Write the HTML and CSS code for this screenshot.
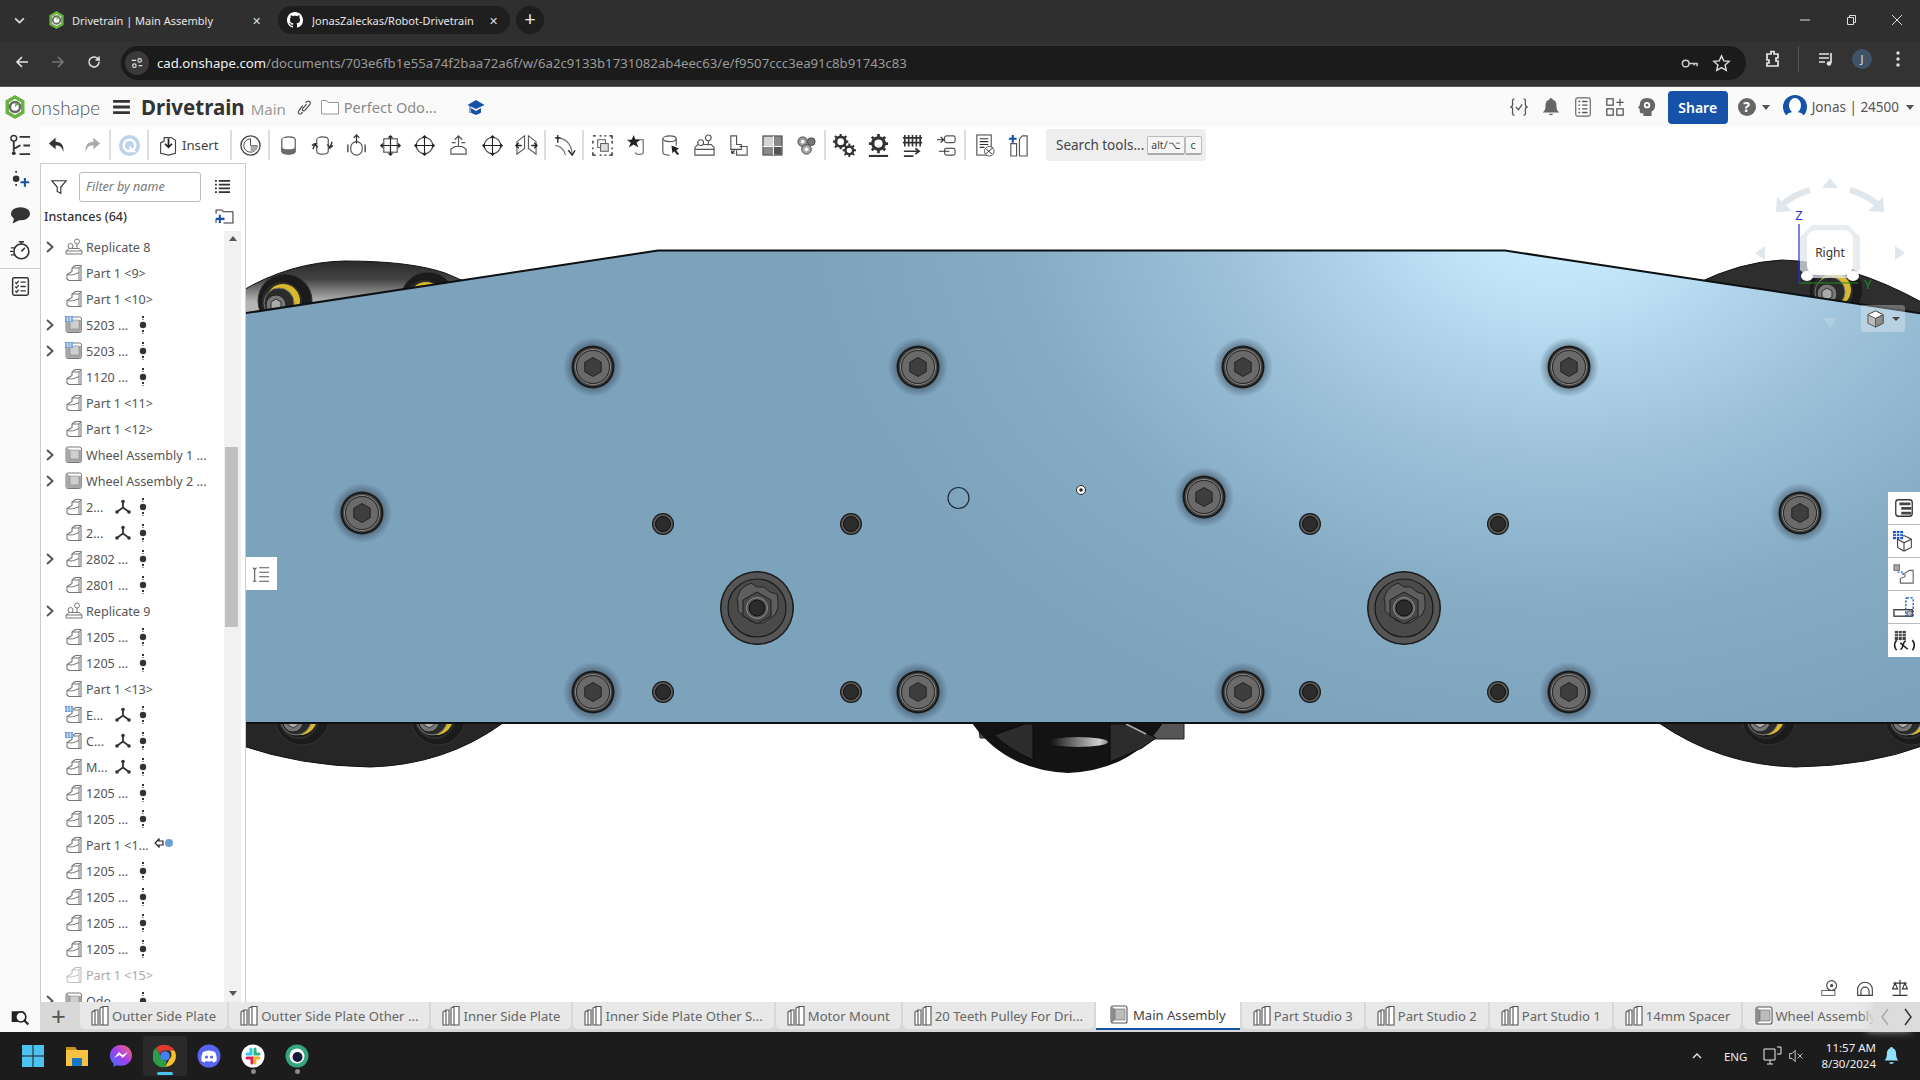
FILE: index.html
```html
<!DOCTYPE html>
<html lang="en">
<head>
  <meta charset="UTF-8">
  <title>Drivetrain | Main Assembly</title>
  <link rel="stylesheet" href="styles.css">
</head>
<body>
  <!-- shared icons -->
  <svg class="defs" aria-hidden="true">
    <defs>
      <symbol id="i-logo" viewBox="0 0 20 24"><path d="M10 0l9.500 5.500v13L10 24 .5 18.500v-13z" fill="#69b342"/><path d="M10 4l6 3.500v9L10 20l-6-3.500v-9z" fill="#fff"/><circle cx="10" cy="12" r="5" fill="none" stroke="#666" stroke-width="2.400"/><path d="M10 7l4 2-4 3z" fill="#69b342"/></symbol>
      <symbol id="i-github" viewBox="0 0 16 16"><path fill="#fff" d="M8 0C3.580 0 0 3.580 0 8c0 3.540 2.290 6.530 5.470 7.590.4.070.55-.17.55-.38 0-.19-.01-.82-.01-1.490-2.010.37-2.530-.49-2.690-.94-.09-.23-.48-.94-.82-1.130-.28-.15-.68-.52-.01-.53.63-.01 1.080.58 1.230.82.72 1.210 1.870.87 2.330.66.070-.52.28-.87.51-1.070-1.780-.2-3.640-.89-3.640-3.950 0-.87.31-1.590.82-2.150-.08-.2-.36-1.020.08-2.120 0 0 .67-.21 2.200.82.64-.18 1.320-.27 2-.27s1.360.09 2 .27c1.530-1.040 2.200-.82 2.200-.82.44 1.100.16 1.920.08 2.120.51.56.82 1.270.82 2.150 0 3.070-1.870 3.750-3.650 3.950.29.25.54.73.54 1.480 0 1.070-.01 1.930-.01 2.200 0 .21.15.46.55.38A8.013 8.013 0 0 0 16 8c0-4.420-3.580-8-8-8z"/></symbol>
      <symbol id="i-part" viewBox="0 0 18 18"><path d="M2 10.500l5-3V4l3.500-2.500H16V16.500H4L2 15z" fill="#fff" stroke="#777" stroke-width="1.100" stroke-linejoin="round"/><path d="M7 4h7l2-2.500M14 4v12.500M2 10.500c3 .6 5 .6 7 0l5-2" fill="none" stroke="#777" stroke-width="1"/></symbol>
      <symbol id="i-partgrid" viewBox="0 0 18 18"><use href="#i-part"/><rect x="0" y="0" width="8" height="6" fill="#5b8fd6"/><path d="M0 2h8M0 4h8M2.700 0v6M5.400 0v6" stroke="#fff" stroke-width=".6"/></symbol>
      <symbol id="i-asm" viewBox="0 0 18 18"><rect x="1" y="1" width="15.500" height="15.500" rx="2" fill="#fff" stroke="#777"/><path d="M1 1l4 3h11.500v12H5L1 16.500z" fill="#a8a8a8"/><rect x="5" y="4" width="9" height="9" fill="#cfcfcf" stroke="#888" stroke-width=".6"/></symbol>
      <symbol id="i-asmgrid" viewBox="0 0 18 18"><use href="#i-asm"/><rect x="0" y="0" width="8" height="6" fill="#5b8fd6"/><path d="M0 2h8M0 4h8M2.700 0v6M5.400 0v6" stroke="#fff" stroke-width=".6"/></symbol>
      <symbol id="i-repl" viewBox="0 0 18 18"><path d="M1 16v-3l3-2.500h10l3 2.500v3zM1 13h16" fill="#fff" stroke="#777"/><circle cx="5.500" cy="8" r="2.500" fill="#fff" stroke="#777"/><circle cx="12" cy="3.500" r="2.500" fill="#fff" stroke="#777"/><path d="M12 6v5" stroke="#777"/></symbol>
      <symbol id="i-dots" viewBox="0 0 10 18"><path d="M5 0v4M5 14v4" stroke="#333" stroke-width="2" stroke-dasharray="2 1.500"/><circle cx="5" cy="9" r="3.200" fill="#333"/></symbol>
      <symbol id="i-triad" viewBox="0 0 16 16"><path d="M8 8.500V3M8 8.500l-5.500 4M8 8.500l5.500 4" stroke="#333" stroke-width="1.800" fill="none"/><circle cx="8" cy="2.500" r="1.800" fill="#333"/><circle cx="2" cy="13" r="1.800" fill="#333"/><circle cx="14" cy="13" r="1.800" fill="#333"/></symbol>
      <symbol id="i-studio" viewBox="0 0 20 20"><path d="M1 6l3-2h3v15H1zM4 4v15M9 19V2l3-1.500h5V19zM12 .5V19" fill="#fff" stroke="#555" stroke-width="1.100"/></symbol>
      <symbol id="i-tabasm" viewBox="0 0 20 20"><rect x="2" y="1" width="16" height="17" rx="2" fill="#fff" stroke="#555" stroke-width="1.100"/><path d="M2 1l4 3h10v11H6l-4 3z" fill="#8d8d8d"/><rect x="6" y="4" width="10" height="11" fill="#bcbcbc" stroke="#666" stroke-width=".6"/></symbol>
      <symbol id="i-cyl" viewBox="0 0 24 24"><ellipse cx="12" cy="6" rx="7" ry="3" fill="#fff" stroke="#555" stroke-width="1.200"/><path d="M5 6v12c0 2 3 3 7 3s7-1 7-3V6" fill="#fff" stroke="#555" stroke-width="1.200"/><path d="M5 13c0 2 3 3 7 3s7-1 7-3v5c0 2-3 3-7 3s-7-1-7-3z" fill="#6a6a6a"/></symbol>
      <symbol id="i-rev" viewBox="0 0 24 24"><ellipse cx="12" cy="6" rx="6" ry="3" fill="#fff" stroke="#555" stroke-width="1.200"/><path d="M6 6v12c0 2 3 3 6 3s6-1 6-3V6" fill="#fff" stroke="#555" stroke-width="1.200"/><path d="M1 12c2-2 3-2 5-2M23 12c-2 2-3 3-5 3M2 16l2-5 3 3M22 8l-2 6-3-3" fill="none" stroke="#333" stroke-width="1.500"/></symbol>
      <symbol id="i-sweep" viewBox="0 0 24 24"><rect x="6" y="8" width="12" height="14" rx="6" fill="#fff" stroke="#555" stroke-width="1.200"/><path d="M12 1v9M9 4l3-3 3 3M3 11v8M21 11v8" fill="none" stroke="#333" stroke-width="1.300"/></symbol>
      <symbol id="i-cross" viewBox="0 0 24 24"><rect x="5" y="5" width="14" height="14" fill="#fff" stroke="#555" stroke-width="1.200"/><path d="M12 2v20M2 12h20" stroke="#222" stroke-width="1.200"/><path d="M12 1l-3 3h6zM12 23l-3-3h6zM1 12l3-3v6zM23 12l-3-3v6z" fill="#222"/></symbol>
      <symbol id="i-crosscirc" viewBox="0 0 24 24"><circle cx="12" cy="12" r="8.500" fill="#fff" stroke="#555" stroke-width="1.200"/><path d="M12 2v20M2 12h20" stroke="#222" stroke-width="1.100"/><path d="M12 1l-3 3h6zM12 23l-3-3h6zM1 12l3-3v6zM23 12l-3-3v6z" fill="#222"/></symbol>
      <symbol id="i-wrap" viewBox="0 0 24 24"><path d="M4 21h16v-5l-4-3H8l-4 3zM12 13V2M8 6l4-4 4 4M5 9h4M15 9h4" fill="#fff" stroke="#555" stroke-width="1.200"/></symbol>
      <symbol id="i-split" viewBox="0 0 24 24"><path d="M2 21V8l8-6v13zM22 21V8l-8-6v13z" fill="#fff" stroke="#555" stroke-width="1.100"/><path d="M1 12h6M23 12h-6M4 9l-3 3 3 3M20 9l3 3-3 3" fill="none" stroke="#222" stroke-width="1.400"/></symbol>
      <symbol id="i-curve" viewBox="0 0 24 24"><path d="M3 4c10 0 16 6 17 17M2 12c6 0 10 5 11 10" fill="none" stroke="#777" stroke-width="1.300"/><path d="M5 1v8M2 4h6M16 17l4 5 3-5" fill="none" stroke="#222" stroke-width="1.400"/></symbol>
      <symbol id="i-select" viewBox="0 0 24 24"><path d="M2 2h3M19 2h3v3M2 19v3h3M22 19v3h-3M2 7v3M22 7v3M2 14v2M22 14v2M9 2h2M14 2h2M9 22h2M14 22h2" stroke="#222" stroke-width="1.400" fill="none"/><rect x="7" y="6" width="8" height="8" fill="#fff" stroke="#555"/><rect x="10" y="10" width="8" height="8" fill="#ddd" stroke="#555"/></symbol>
      <symbol id="i-star" viewBox="0 0 24 24"><path d="M7 6h12v13c0 3-8 3-8 0" fill="#fff" stroke="#666" stroke-width="1.200"/><path d="M9 1l2 5h5l-4 3 2 5-5-3-5 3 2-5-4-3h5z" fill="#222"/></symbol>
      <symbol id="i-cursor" viewBox="0 0 24 24"><ellipse cx="11" cy="5" rx="7" ry="3" fill="#fff" stroke="#555" stroke-width="1.200"/><path d="M4 5v14c0 2 3 3 7 3M18 5v7" fill="#fff" stroke="#555" stroke-width="1.200"/><path d="M13 12l8 3-3 2 3 4-2 1-3-4-2 2z" fill="#222"/></symbol>
      <symbol id="i-kit" viewBox="0 0 24 24"><path d="M2 22v-8l3-3h14l3 3v8zM2 16h20" fill="#fff" stroke="#555" stroke-width="1.200"/><circle cx="8" cy="9" r="3" fill="#fff" stroke="#555" stroke-width="1.200"/><circle cx="16" cy="4" r="3" fill="#fff" stroke="#555" stroke-width="1.200"/><path d="M16 7v5" stroke="#555" stroke-width="1.200"/></symbol>
      <symbol id="i-parts" viewBox="0 0 24 24"><path d="M4 2h6v9h5v5H4zM13 13h8v9H10v-5" fill="#fff" stroke="#555" stroke-width="1.200"/><path d="M5 20l3-3M5 17v3h3" fill="none" stroke="#222" stroke-width="1.100"/></symbol>
      <symbol id="i-quad" viewBox="0 0 24 24"><rect x="2" y="2" width="20" height="20" fill="#888" stroke="#444"/><rect x="3" y="3" width="10" height="10" fill="#d5d5d5"/><rect x="13" y="13" width="8" height="8" fill="#555"/><path d="M13 2v20M2 13h20" stroke="#fff"/></symbol>
      <symbol id="i-blob" viewBox="0 0 24 24"><circle cx="8" cy="8" r="5" fill="#999" stroke="#444"/><circle cx="17" cy="8" r="4" fill="#777" stroke="#444"/><circle cx="12" cy="16" r="5" fill="#aaa" stroke="#444"/><circle cx="8" cy="8" r="2" fill="#fff"/><circle cx="12" cy="16" r="2" fill="#fff"/></symbol>
      <symbol id="i-gears" viewBox="0 0 24 24"><circle cx="8" cy="8" r="5" fill="none" stroke="#333" stroke-width="3"/><path d="M8 0v3M8 13v3M0 8h3M13 8h3M2 2l2 2M12 12l2 2M14 2l-2 2M2 14l2-2" stroke="#333" stroke-width="2.200"/><circle cx="17" cy="17" r="4" fill="none" stroke="#333" stroke-width="2.600"/><path d="M17 10v3M17 21v3M10 17h3M21 17h3M12 12l2 2M20 20l2 2M22 12l-2 2M12 22l2-2" stroke="#333" stroke-width="2"/></symbol>
      <symbol id="i-gear" viewBox="0 0 24 24"><circle cx="12" cy="10" r="6" fill="none" stroke="#333" stroke-width="3.400"/><path d="M12 0v4M12 16v4M2 10h4M18 10h4M5 3l3 3M16 14l3 3M19 3l-3 3M5 17l3-3" stroke="#333" stroke-width="2.800"/><path d="M2 23h20" stroke="#333" stroke-width="2.400"/></symbol>
      <symbol id="i-rack" viewBox="0 0 24 24"><path d="M4 1v12M8 1v12M12 1v12M16 1v12M20 1v12M2 4h20M2 9h20" stroke="#333" stroke-width="1.700" fill="none"/><path d="M3 18h16M15 15l4 3-4 3M3 23h10" stroke="#333" stroke-width="1.800" fill="none"/></symbol>
      <symbol id="i-link2" viewBox="0 0 24 24"><rect x="10" y="2" width="11" height="7" rx="2" fill="#fff" stroke="#555" stroke-width="1.200"/><rect x="10" y="15" width="11" height="7" rx="2" fill="#fff" stroke="#555" stroke-width="1.200"/><path d="M2 6h7M6 3l3 3-3 3M15 18H4" stroke="#333" stroke-width="1.300" fill="none"/></symbol>
      <symbol id="i-bom" viewBox="0 0 24 24"><rect x="4" y="1" width="15" height="21" fill="#fff" stroke="#555" stroke-width="1.200"/><path d="M7 5h9M7 8h9M7 11h9M7 14h5" stroke="#333" stroke-width="1.200"/><circle cx="17" cy="18" r="5" fill="#fff" stroke="#555"/><path d="M13 21l8-7M14 16l6 5" stroke="#333"/></symbol>
      <symbol id="i-addcol" viewBox="0 0 24 24"><path d="M4 10h6v13H4zM13 5l3-3h5v21h-8z" fill="#fff" stroke="#555" stroke-width="1.200"/><path d="M6 1v8M2 5h8" stroke="#1552a8" stroke-width="2.200"/></symbol>
      <symbol id="i-side1" viewBox="0 0 24 24"><rect x="3" y="3" width="18" height="18" rx="3" fill="#fff" stroke="#333" stroke-width="1.400"/><path d="M7 6h12v3H7zM9 11h11v3H9zM9 16h11v3H9z" fill="#444"/></symbol>
      <symbol id="i-side2" viewBox="0 0 24 24"><path d="M5 10v9l7 4 8-4V10l-8-4z" fill="#fff" stroke="#444" stroke-width="1.200"/><path d="M5 10l7 4 8-4M12 14v9" stroke="#444" fill="none" stroke-width="1.200"/><rect x="0" y="1" width="11" height="9" fill="#1552c8"/><path d="M0 4h11M0 7h11M3.700 1v9M7.400 1v9" stroke="#fff"/></symbol>
      <symbol id="i-side3" viewBox="0 0 24 24"><rect x="1" y="2" width="6" height="6" fill="#aaa" stroke="#666"/><path d="M5 10h6v4" stroke="#1552c8" stroke-dasharray="2 1.500" fill="none" stroke-width="1.400"/><path d="M8 22v-5l5-2v-4l5-3h4v14H10z" fill="#fff" stroke="#666" stroke-width="1.200"/></symbol>
      <symbol id="i-side4" viewBox="0 0 24 24"><rect x="1" y="15" width="20" height="7" fill="#fff" stroke="#222" stroke-width="1.300"/><rect x="14" y="2" width="8" height="20" rx="1" fill="none" stroke="#1552c8" stroke-dasharray="2.500 1.500" stroke-width="1.400"/><circle cx="18" cy="19" r="3" fill="#bbb" stroke="#555"/></symbol>
      <symbol id="i-side5" viewBox="0 0 24 24"><rect x="2" y="1" width="12" height="10" fill="#444"/><path d="M2 4h12M2 7h12M6 1v10M10 1v10" stroke="#fff" stroke-width=".8"/><path d="M4 11c-3 3-3 8 0 11M21 11c3 3 3 8 0 11M8 21c4 0 2-9 6-9M8 14l8 7" fill="none" stroke="#222" stroke-width="1.800"/></symbol>
      <symbol id="i-chev" viewBox="0 0 8 12"><path d="M1 1l5.500 5L1 11" fill="none" stroke="#555" stroke-width="1.900"/></symbol>
    </defs>
  </svg>

  <!-- browser -->
  <div class="tabstrip">
    <svg class="tab-list" viewBox="0 0 10 10"><path d="M1 3l4 4 4-4" fill="none" stroke="#ddd" stroke-width="1.500"/></svg>
    <div class="btab">
      <svg class="fav"><use href="#i-logo"/></svg>
      <span class="btab-title">Drivetrain | Main Assembly</span>
      <span class="btab-x">✕</span>
    </div>
    <div class="btab btab-dark">
      <svg class="fav"><use href="#i-github"/></svg>
      <span class="btab-title">JonasZaleckas/Robot-Drivetrain</span>
      <span class="btab-x">✕</span>
    </div>
    <div class="btab-new">+</div>
    <div class="win-ctrl">
      <svg viewBox="0 0 12 12"><path d="M1 6h10" stroke="#ddd"/></svg>
      <svg viewBox="0 0 12 12"><path d="M2.500 3.500h6v7h-6zM4.500 3.500V1.500h6v7h-2" fill="none" stroke="#ddd"/></svg>
      <svg viewBox="0 0 12 12"><path d="M1 1l10 10M11 1L1 11" stroke="#ddd"/></svg>
    </div>
  </div>
  <div class="urlbar">
    <svg class="nav-ic" viewBox="0 0 16 16"><path d="M14 8H3M8 3L3 8l5 5" fill="none" stroke="#e3e3e3" stroke-width="1.600"/></svg>
    <svg class="nav-ic" viewBox="0 0 16 16"><path d="M2 8h11M8 3l5 5-5 5" fill="none" stroke="#777" stroke-width="1.600"/></svg>
    <svg class="nav-ic" viewBox="0 0 16 16"><path d="M13 8a5 5 0 1 1-1.500-3.600L13 6V2.500M13 6H9.500" fill="none" stroke="#e3e3e3" stroke-width="1.500"/></svg>
    <div class="omnibox">
      <span class="site-info"><svg viewBox="0 0 16 16"><path d="M2 5h5M10 11h4" stroke="#e3e3e3" stroke-width="1.300"/><circle cx="11" cy="5" r="2" fill="none" stroke="#e3e3e3" stroke-width="1.300"/><circle cx="5" cy="11" r="2" fill="none" stroke="#e3e3e3" stroke-width="1.300"/></svg></span>
      <span class="url"><b>cad.onshape.com</b>/documents/703e6fb1e55a74f2baa72a6f/w/6a2c9133b1731082ab4eec63/e/f9507ccc3ea91c8b91743c83</span>
      <svg class="omni-ic" viewBox="0 0 20 20"><circle cx="6" cy="10" r="3.500" fill="none" stroke="#ccc" stroke-width="1.600"/><path d="M9.500 10H18v3M15 10v2" fill="none" stroke="#ccc" stroke-width="1.600"/></svg>
      <svg class="omni-ic" viewBox="0 0 20 20"><path d="M10 2l2.400 5.200 5.600.6-4.200 3.800 1.200 5.600L10 14.400 5 17.200l1.200-5.600L2 7.800l5.600-.6z" fill="none" stroke="#ddd" stroke-width="1.500"/></svg>
    </div>
    <svg class="ext-ic" viewBox="0 0 20 20"><path d="M4 5h4V2.500h3V5h4v4h-2v3h2v5H4v-3h2v-3H4z" fill="none" stroke="#e8e8e8" stroke-width="1.700"/></svg>
    <span class="url-div"></span>
    <svg class="ext-ic media" viewBox="0 0 20 20"><path d="M3 5h10M3 9h10M3 13h6" stroke="#e3e3e3" stroke-width="1.700"/><path d="M15 4v10" stroke="#e3e3e3" stroke-width="1.700"/><circle cx="13" cy="14.500" r="2.300" fill="#e3e3e3"/></svg>
    <span class="avatar">J</span>
    <svg class="ext-ic kebab" viewBox="0 0 4 20"><circle cx="2" cy="4" r="1.700" fill="#e3e3e3"/><circle cx="2" cy="10" r="1.700" fill="#e3e3e3"/><circle cx="2" cy="16" r="1.700" fill="#e3e3e3"/></svg>
  </div>

  <!-- onshape header -->
  <header class="os-top">
    <svg class="os-logo"><use href="#i-logo"/></svg>
    <span class="os-name">onshape</span>
    <svg class="burger" viewBox="0 0 18 15"><path d="M0 1.500h18M0 7.500h18M0 13.500h18" stroke="#333" stroke-width="3"/></svg>
    <span class="doc-title">Drivetrain</span>
    <span class="doc-branch">Main</span>
    <svg class="doc-link" viewBox="0 0 16 16"><path d="M9 3l2-1.500c1-.7 2.500-.2 3 .8.5 1 .2 2-.5 2.700l-5 6c-.8.8-2 .8-2.500.2-.5-.5-.4-1.400.2-2.200l4-4.500M6 13l-1.500 1.500c-1 .8-2.500.4-3-.6-.4-.9-.2-1.900.5-2.600L6 6" fill="none" stroke="#444" stroke-width="1.200"/></svg>
    <svg class="doc-folder" viewBox="0 0 18 16"><path d="M.5 2.500V15h17V3.500H7L5.500 1.500H.5z" fill="#fff" stroke="#999"/></svg>
    <span class="doc-folder-name">Perfect Odo...</span>
    <svg class="doc-cap" viewBox="0 0 18 18"><path d="M9 2L.5 7 9 11l8.500-4z" fill="#1552a8"/><path d="M4 10v4.500c2 1.500 3.500 1.500 5 2.500v-4z" fill="#1552a8"/><path d="M9 13v4c1.500-1 3-1 5-2.500V10z" fill="#1552a8"/><path d="M3 8v7" stroke="#1552a8"/></svg>
    <div class="top-right">
      <svg viewBox="0 0 22 22"><path d="M6 2C3 2 4 5 4 8c0 2-1 3-2.500 3C3 11 4 12 4 14c0 3-1 6 2 6M16 2c3 0 2 3 2 6 0 2 1 3 2.500 3-1.500 0-2.500 1-2.500 3 0 3 1 6-2 6M7.500 11l3 3 4-6" fill="none" stroke="#555" stroke-width="1.400"/></svg>
      <svg viewBox="0 0 22 22"><path d="M11 1c1 0 2 1 2 2 3 1 4 3 4 6 0 5 1 6 3 8H2c2-2 3-3 3-8 0-3 1-5 4-6 0-1 1-2 2-2zM8.500 18.500h5c0 2-5 2-5 0z" fill="#666"/></svg>
      <svg viewBox="0 0 22 22"><rect x="3" y="1" width="16" height="20" rx="2" fill="#fff" stroke="#666" stroke-width="1.300"/><path d="M10 5h6M10 9h6M10 13h6M10 17h6M6 5h2M6 9h2M6 13h2M6 17h2" stroke="#555" stroke-width="1.500"/></svg>
      <svg viewBox="0 0 22 22"><rect x="2" y="2" width="7" height="7" fill="none" stroke="#555" stroke-width="1.400"/><rect x="2" y="13" width="7" height="7" fill="none" stroke="#555" stroke-width="1.400"/><rect x="13" y="13" width="7" height="7" fill="none" stroke="#555" stroke-width="1.400"/><path d="M16.500 2v8M12.500 6h8" stroke="#555" stroke-width="1.400"/></svg>
      <svg viewBox="0 0 22 22"><path d="M11 1c5 0 9 3 9 8 0 4-2 6-4 7v5H7v-3H5c-1 0-2-1-2-2v-3L1 12l2-3c0-5 3-8 8-8z" fill="#666"/><circle cx="11" cy="9" r="3.500" fill="#fff"/><circle cx="11" cy="9" r="1.500" fill="#666"/></svg>
    </div>
    <button class="share">Share</button>
    <span class="help">?</span><span class="caret"></span>
    <svg class="user-ic" viewBox="0 0 24 24"><circle cx="12" cy="12" r="12" fill="#1552a8"/><ellipse cx="12" cy="10.500" rx="6" ry="7.500" fill="#fff"/><path d="M2 24c1-6 5-7 10-7s9 1 10 7z" fill="#fff"/></svg>
    <span class="user-name">Jonas | 24500</span><span class="caret"></span>
  </header>

  <main class="workspace">
    <nav class="rail">
      <div class="rail-tab"><svg viewBox="0 0 24 24"><circle cx="5" cy="4.500" r="3" fill="none" stroke="#333" stroke-width="1.500"/><circle cx="5" cy="20" r="2" fill="#333"/><path d="M5 7.500V18M5 15c4 0 4-3 7-3M11 3h11M15 12h7M11 21h11" stroke="#333" stroke-width="2" fill="none"/></svg></div>
      <svg class="rail-ic" viewBox="0 0 24 24"><path d="M7 1v3M7 16v3" stroke="#333" stroke-width="2" stroke-dasharray="2 1.500"/><circle cx="7" cy="10" r="3.800" fill="#333"/><path d="M17 9v10M12 14h10" stroke="#1552a8" stroke-width="2.400"/></svg>
      <svg class="rail-ic" viewBox="0 0 24 24"><ellipse cx="12" cy="10" rx="11" ry="7.500" fill="#333"/><path d="M5 14l-2 7 8-4z" fill="#333"/></svg>
      <svg class="rail-ic" viewBox="0 0 24 24"><circle cx="13" cy="13" r="8.500" fill="#fff" stroke="#333" stroke-width="1.800"/><path d="M13 13l4-4M10 2h6M13 2v3M1 9h5M0 13h4M1 17h5" stroke="#333" stroke-width="1.700"/></svg>
      <span class="rail-sep"></span>
      <svg class="rail-ic" viewBox="0 0 24 24"><rect x="3" y="2" width="18" height="20" rx="2" fill="#fff" stroke="#333" stroke-width="1.700"/><path d="M6 7l1.500 1.500L10 5.500M6 12l1.500 1.500L10 10.500M6 17l1.500 1.500L10 15.500M12 7h6M12 12h6M12 17h6" fill="none" stroke="#333" stroke-width="1.500"/></svg>
    </nav>

    <div class="main-col">
      <div class="toolbar">
        <span class="tb"><svg viewBox="0 0 24 24"><path d="M10 4L3 10l7 6v-4c5 0 7 2 8 7 1-7-2-11-8-11z" fill="#333"/></svg></span>
        <span class="tb"><svg viewBox="0 0 24 24"><path d="M14 4l7 6-7 6v-4c-5 0-7 2-8 7-1-7 2-11 8-11z" fill="#aaa"/></svg></span>
        <i class="tb-sep"></i>
        <span class="tb"><svg viewBox="0 0 24 24"><circle cx="12" cy="12" r="11" fill="#bdd3ea"/><circle cx="12" cy="12" r="6" fill="none" stroke="#fff" stroke-width="2.400"/><path d="M12 12l7 7h-7z" fill="#fff"/></svg></span>
        <i class="tb-sep"></i>
        <span class="tb-insert"><svg viewBox="0 0 24 24"><path d="M3 9l4-2V3h8l5 3v15l-8 2-9-2z" fill="#fff" stroke="#444" stroke-width="1.300"/><path d="M12 4v9M8 10l4 4 4-4" fill="none" stroke="#222" stroke-width="2"/></svg>Insert</span>
        <i class="tb-sep"></i>
        <span class="tb"><svg viewBox="0 0 24 24"><circle cx="12" cy="12" r="10" fill="#fff" stroke="#444" stroke-width="1.400"/><path d="M12 12V5a7 7 0 1 0 7 7z" fill="#fff" stroke="#444"/><path d="M12 12h7a7 7 0 0 1-7 7z" fill="#aaa"/></svg></span>
        <i class="tb-sep"></i>
        <span class="tb"><svg><use href="#i-cyl"/></svg></span>
        <span class="tb"><svg><use href="#i-rev"/></svg></span>
        <span class="tb"><svg><use href="#i-sweep"/></svg></span>
        <span class="tb"><svg><use href="#i-cross"/></svg></span>
        <span class="tb"><svg><use href="#i-crosscirc"/></svg></span>
        <span class="tb"><svg><use href="#i-wrap"/></svg></span>
        <span class="tb"><svg><use href="#i-crosscirc"/></svg></span>
        <span class="tb"><svg><use href="#i-split"/></svg></span>
        <i class="tb-sep"></i>
        <span class="tb"><svg><use href="#i-curve"/></svg></span>
        <i class="tb-sep"></i>
        <span class="tb"><svg><use href="#i-select"/></svg></span>
        <span class="tb"><svg><use href="#i-star"/></svg></span>
        <span class="tb"><svg><use href="#i-cursor"/></svg></span>
        <span class="tb"><svg><use href="#i-kit"/></svg></span>
        <span class="tb"><svg><use href="#i-parts"/></svg></span>
        <span class="tb"><svg><use href="#i-quad"/></svg></span>
        <span class="tb"><svg><use href="#i-blob"/></svg></span>
        <i class="tb-sep"></i>
        <span class="tb"><svg><use href="#i-gears"/></svg></span>
        <span class="tb"><svg><use href="#i-gear"/></svg></span>
        <span class="tb"><svg><use href="#i-rack"/></svg></span>
        <span class="tb"><svg><use href="#i-link2"/></svg></span>
        <i class="tb-sep"></i>
        <span class="tb"><svg><use href="#i-bom"/></svg></span>
        <span class="tb"><svg><use href="#i-addcol"/></svg></span>
        <div class="tool-search">Search tools...<kbd>alt/⌥</kbd><kbd>c</kbd></div>
      </div>

      <div class="work-row">
        <aside class="panel">
          <div class="filter-row">
            <svg class="funnel" viewBox="0 0 18 18"><path d="M1 2h16l-6 7v7l-4-2V9z" fill="none" stroke="#333" stroke-width="1.300"/></svg>
            <div class="filter-box">Filter by name</div>
            <svg class="list-ic" viewBox="0 0 16 16"><path d="M0 2h2M4 2h12M0 6h2M4 6h12M0 10h2M4 10h12M0 14h2M4 14h12" stroke="#333" stroke-width="2"/></svg>
          </div>
          <div class="inst-row">
            <span>Instances (64)</span>
            <svg class="folder-plus" viewBox="0 0 20 16"><path d="M1 5V1h6l2 2h10v12H9M1 10v5" fill="none" stroke="#333" stroke-width="1.100"/><path d="M5 6v9M1 10.500h9" stroke="#1552a8" stroke-width="2.200"/></svg>
          </div>
          <div class="tree-wrap">
            <ul class="tree">
              <li class="row"><svg class="chev"><use href="#i-chev"/></svg><svg class="ic"><use href="#i-repl"/></svg><span class="name wide">Replicate 8</span></li>
              <li class="row"><svg class="ic"><use href="#i-part"/></svg><span class="name wide">Part 1 &lt;9&gt;</span></li>
              <li class="row"><svg class="ic"><use href="#i-part"/></svg><span class="name wide">Part 1 &lt;10&gt;</span></li>
              <li class="row"><svg class="chev"><use href="#i-chev"/></svg><svg class="ic"><use href="#i-asmgrid"/></svg><span class="name">5203 ...</span><svg class="dots"><use href="#i-dots"/></svg></li>
              <li class="row"><svg class="chev"><use href="#i-chev"/></svg><svg class="ic"><use href="#i-asmgrid"/></svg><span class="name">5203 ...</span><svg class="dots"><use href="#i-dots"/></svg></li>
              <li class="row"><svg class="ic"><use href="#i-part"/></svg><span class="name">1120 ...</span><svg class="dots"><use href="#i-dots"/></svg></li>
              <li class="row"><svg class="ic"><use href="#i-part"/></svg><span class="name wide">Part 1 &lt;11&gt;</span></li>
              <li class="row"><svg class="ic"><use href="#i-part"/></svg><span class="name wide">Part 1 &lt;12&gt;</span></li>
              <li class="row"><svg class="chev"><use href="#i-chev"/></svg><svg class="ic"><use href="#i-asm"/></svg><span class="name wide">Wheel Assembly 1 ...</span></li>
              <li class="row"><svg class="chev"><use href="#i-chev"/></svg><svg class="ic"><use href="#i-asm"/></svg><span class="name wide">Wheel Assembly 2 ...</span></li>
              <li class="row"><svg class="ic"><use href="#i-part"/></svg><span class="name short">2...</span><svg class="triad"><use href="#i-triad"/></svg><svg class="dots"><use href="#i-dots"/></svg></li>
              <li class="row"><svg class="ic"><use href="#i-part"/></svg><span class="name short">2...</span><svg class="triad"><use href="#i-triad"/></svg><svg class="dots"><use href="#i-dots"/></svg></li>
              <li class="row"><svg class="chev"><use href="#i-chev"/></svg><svg class="ic"><use href="#i-part"/></svg><span class="name">2802 ...</span><svg class="dots"><use href="#i-dots"/></svg></li>
              <li class="row"><svg class="ic"><use href="#i-part"/></svg><span class="name">2801 ...</span><svg class="dots"><use href="#i-dots"/></svg></li>
              <li class="row"><svg class="chev"><use href="#i-chev"/></svg><svg class="ic"><use href="#i-repl"/></svg><span class="name wide">Replicate 9</span></li>
              <li class="row"><svg class="ic"><use href="#i-part"/></svg><span class="name">1205 ...</span><svg class="dots"><use href="#i-dots"/></svg></li>
              <li class="row"><svg class="ic"><use href="#i-part"/></svg><span class="name">1205 ...</span><svg class="dots"><use href="#i-dots"/></svg></li>
              <li class="row"><svg class="ic"><use href="#i-part"/></svg><span class="name wide">Part 1 &lt;13&gt;</span></li>
              <li class="row"><svg class="ic"><use href="#i-partgrid"/></svg><span class="name short">E...</span><svg class="triad"><use href="#i-triad"/></svg><svg class="dots"><use href="#i-dots"/></svg></li>
              <li class="row"><svg class="ic"><use href="#i-partgrid"/></svg><span class="name short">C...</span><svg class="triad"><use href="#i-triad"/></svg><svg class="dots"><use href="#i-dots"/></svg></li>
              <li class="row"><svg class="ic"><use href="#i-part"/></svg><span class="name short">M...</span><svg class="triad"><use href="#i-triad"/></svg><svg class="dots"><use href="#i-dots"/></svg></li>
              <li class="row"><svg class="ic"><use href="#i-part"/></svg><span class="name">1205 ...</span><svg class="dots"><use href="#i-dots"/></svg></li>
              <li class="row"><svg class="ic"><use href="#i-part"/></svg><span class="name">1205 ...</span><svg class="dots"><use href="#i-dots"/></svg></li>
              <li class="row"><svg class="ic"><use href="#i-part"/></svg><span class="name mid">Part 1 &lt;1...</span><svg class="back-arrow" viewBox="0 0 10 10"><path d="M9 3H5V1L1 5l4 4V7h4z" fill="#fff" stroke="#222" stroke-width="1.200"/></svg><i class="blue-dot"></i></li>
              <li class="row"><svg class="ic"><use href="#i-part"/></svg><span class="name">1205 ...</span><svg class="dots"><use href="#i-dots"/></svg></li>
              <li class="row"><svg class="ic"><use href="#i-part"/></svg><span class="name">1205 ...</span><svg class="dots"><use href="#i-dots"/></svg></li>
              <li class="row"><svg class="ic"><use href="#i-part"/></svg><span class="name">1205 ...</span><svg class="dots"><use href="#i-dots"/></svg></li>
              <li class="row"><svg class="ic"><use href="#i-part"/></svg><span class="name">1205 ...</span><svg class="dots"><use href="#i-dots"/></svg></li>
              <li class="row off"><svg class="ic"><use href="#i-part"/></svg><span class="name wide">Part 1 &lt;15&gt;</span></li>
              <li class="row"><svg class="chev"><use href="#i-chev"/></svg><svg class="ic"><use href="#i-asm"/></svg><span class="name">Odo ...</span><svg class="dots"><use href="#i-dots"/></svg></li>
            </ul>
            <div class="scroll">
              <i class="sc-up"></i>
              <i class="sc-thumb"></i>
              <i class="sc-down"></i>
            </div>
          </div>
        </aside>

        <!-- graphics area, drawn in page coordinates -->
        <section class="viewport">
          <svg class="cad" viewBox="246 163 1674 839" preserveAspectRatio="none">
            <defs>
              <radialGradient id="plateG" gradientUnits="userSpaceOnUse" cx="1560" cy="200" r="760" gradientTransform="translate(1560 200) scale(1 .75) translate(-1560 -200)">
                <stop offset="0" stop-color="#d0f3ff"/>
                <stop offset=".18" stop-color="#bde2f6"/>
                <stop offset=".45" stop-color="#9cc1d9"/>
                <stop offset=".72" stop-color="#86abc5"/>
                <stop offset="1" stop-color="#7da2bc"/>
              </radialGradient>
              <linearGradient id="tireG" gradientUnits="userSpaceOnUse" x1="0" y1="261" x2="0" y2="302">
                <stop offset="0" stop-color="#2a2a2a"/>
                <stop offset=".45" stop-color="#444"/>
                <stop offset=".85" stop-color="#999"/>
                <stop offset="1" stop-color="#b5b5b5"/>
              </linearGradient>
              <linearGradient id="rollerG" gradientUnits="userSpaceOnUse" x1="1050" y1="0" x2="1108" y2="0">
                <stop offset="0" stop-color="#fff" stop-opacity="0"/>
                <stop offset=".85" stop-color="#fff" stop-opacity=".8"/>
                <stop offset="1" stop-color="#fff" stop-opacity=".5"/>
              </linearGradient>
              <radialGradient id="halo">
                <stop offset=".55" stop-color="#1c2a36" stop-opacity=".6"/>
                <stop offset="1" stop-color="#1c2a36" stop-opacity="0"/>
              </radialGradient>
              <g id="bolt">
                <circle r="30" fill="url(#halo)"/>
                <circle r="21.500" fill="#1e1e1e"/>
                <circle r="20" fill="#444" stroke="#141414"/>
                <circle r="17.500" fill="none" stroke="#bbb" stroke-width=".6"/>
                <circle r="16.500" fill="#6a6a6a" stroke="#2a2a2a"/>
                <path d="M0-9.500l8.200 4.750v9.500l-8.200 4.750-8.200-4.750v-9.500z" fill="#3e3e3e" stroke="#232323"/>
              </g>
              <g id="pin">
                <circle r="11" fill="#1a1a1a"/>
                <circle r="9.800" fill="#5a5a5a"/>
                <circle r="7.500" fill="#2c2c2c" stroke="#111"/>
              </g>
              <g id="hub">
                <circle r="37" fill="#1f1f1f"/>
                <circle r="36" fill="#555" stroke="#1c1c1c"/>
                <circle r="29" fill="#4a4a4a" stroke="#1a1a1a" stroke-width="1.200"/>
                <path d="M0-21l7 0 6 5 7 2 1 7 0 7-3 7-6 4-6 4-6 0-7-2-6-5-6-5 0-7-1-6 3-7 5-5 6-3z" fill="#5e5e5e" stroke="#222"/>
                <path d="M0-16l14 8v16l-14 8-14-8V-8z" fill="#484848" stroke="#1d1d1d"/>
                <circle r="10.500" fill="#555" stroke="#a0a0a0" stroke-width=".8"/>
                <circle r="8" fill="#2b2b2b" stroke="#111"/>
              </g>
              <g id="bearing">
                <circle r="27" fill="#1b1b1b" stroke="#333"/>
                <circle cx="-3" cy="1" r="19" fill="none" stroke="#2d2d2d" stroke-width="2"/>
                <circle cx="-2" cy="0" r="17" fill="#d9b92c"/>
                <circle cx="-6" cy="2" r="15" fill="#2b2b2b" stroke="#777"/>
                <circle cx="-9" cy="4" r="10" fill="#777" stroke="#222"/>
                <path d="M-9-2l5 3v6l-5 3-5-3v-6z" fill="#aaa" stroke="#333"/>
              </g>
            </defs>

            <!-- wheels behind the plate -->
            <path d="M240 292Q290 262 345 261Q410 261 445 273L466 282V330H240Z" fill="url(#tireG)" stroke="#111"/>
            <use href="#bearing" x="285" y="301"/>
            <use href="#bearing" x="428" y="299"/>
            <path d="M1696 284Q1740 262 1782 260Q1850 262 1925 304V340H1696Z" fill="#2e2e2e" stroke="#111"/>
            <use href="#bearing" x="1836" y="290"/>
            <path d="M240 723V745Q300 766 370 767Q445 765 503 723Z" fill="#262626" stroke="#111"/>
            <use href="#bearing" x="302" y="718"/>
            <use href="#bearing" x="438" y="718"/>
            <path d="M1659 723Q1720 765 1795 767Q1870 766 1925 745V723Z" fill="#262626" stroke="#111"/>
            <use href="#bearing" x="1769" y="718"/>
            <use href="#bearing" x="1912" y="718"/>
            <path d="M1145 723H1184V739H1150ZM978 723H1000V738H980Z" fill="#555" stroke="#222"/>
            <path d="M972 723Q1005 770 1068 773Q1132 770 1163 723Z" fill="#131313"/>
            <path d="M994 735L1025 724H1033V760Q1010 750 994 735Z" fill="#2c2c2c" stroke="#0b0b0b"/>
            <path d="M1110 724H1130L1156 738L1142 748L1110 762Z" fill="#2c2c2c" stroke="#0b0b0b"/>
            <path d="M1126 724L1146 734" stroke="#aaa" stroke-width="1.500"/>
            <ellipse cx="1078" cy="742" rx="30" ry="5" fill="url(#rollerG)"/>

            <!-- plate -->
            <path d="M240 314L658 250.500H1505L1925 314V723H240Z" fill="url(#plateG)" stroke="#0d1114" stroke-width="2"/>

            <use href="#bolt" x="593" y="367"/>
            <use href="#bolt" x="918" y="367"/>
            <use href="#bolt" x="1243" y="367"/>
            <use href="#bolt" x="1569" y="367"/>
            <use href="#bolt" x="362" y="513"/>
            <use href="#bolt" x="1204" y="497"/>
            <use href="#bolt" x="1800" y="513"/>
            <use href="#bolt" x="593" y="692"/>
            <use href="#bolt" x="918" y="692"/>
            <use href="#bolt" x="1243" y="692"/>
            <use href="#bolt" x="1569" y="692"/>
            <use href="#pin" x="663" y="524"/>
            <use href="#pin" x="851" y="524"/>
            <use href="#pin" x="1310" y="524"/>
            <use href="#pin" x="1498" y="524"/>
            <use href="#pin" x="663" y="692"/>
            <use href="#pin" x="851" y="692"/>
            <use href="#pin" x="1310" y="692"/>
            <use href="#pin" x="1498" y="692"/>
            <use href="#hub" x="757" y="608"/>
            <use href="#hub" x="1404" y="608"/>
            <circle cx="958.500" cy="498" r="10.500" fill="none" stroke="#1e2a33" stroke-width="1.200"/>
            <circle cx="1081" cy="490" r="4.500" fill="#fff" stroke="#222"/>
            <circle cx="1081" cy="490" r="1.800" fill="#222"/>

            <!-- view cube -->
            <path d="M1810 190Q1795 194 1783 204M1850 190Q1865 194 1877 204" fill="none" stroke="#dfe6ec" stroke-width="6"/>
            <g fill="#dfe6ec">
              <path d="M1776 212L1777 197L1792 211Z"/>
              <path d="M1884 212L1883 197L1868 211Z"/>
              <path d="M1830 178L1838 188H1822Z"/>
              <path d="M1755 253L1765 246V260Z"/>
              <path d="M1905 253L1895 246V260Z"/>
              <path d="M1830 328L1823 318H1837Z" opacity=".3"/>
              <path d="M1812 225H1848L1860 237V270L1850 278H1810L1800 270V237Z" opacity=".75"/>
            </g>
            <rect x="1807" y="230" width="46" height="45" rx="9" fill="#fff"/>
            <ellipse cx="1807" cy="276" rx="6" ry="5" fill="#fff"/>
            <ellipse cx="1853" cy="276" rx="6" ry="5" fill="#fff"/>
            <path d="M1799 224V283" stroke="#2a2ad0" stroke-width="1.200"/>
            <path d="M1799 283H1858" stroke="#1f8a1f" stroke-width="1.200"/>
            <text class="ax-z" x="1799" y="220">Z</text>
            <text class="ax-y" x="1868" y="289">Y</text>
            <text class="ax-r" x="1830" y="257">Right</text>
          </svg>

          <div class="float-list"><svg viewBox="0 0 20 20"><path d="M1 3l2 2 2-2M3 5v13M8 3h11M8 8h11M8 13h11M8 18h11M1 18h4" fill="none" stroke="#555" stroke-width="1.200"/></svg></div>
          <div class="view-btn">
            <svg viewBox="0 0 20 20"><path d="M2 6l8-4 8 4v9l-8 4-8-4z" fill="#bbb" stroke="#555"/><path d="M2 6l8 4 8-4-8-4z" fill="#fff" stroke="#555"/><path d="M10 10v9l8-4V6z" fill="#8d8d8d" stroke="#555"/></svg>
            <i class="view-caret"></i>
          </div>
          <div class="side-btns">
            <span><svg><use href="#i-side1"/></svg></span>
            <span><svg><use href="#i-side2"/></svg></span>
            <span><svg><use href="#i-side3"/></svg></span>
            <span><svg><use href="#i-side4"/></svg></span>
            <span><svg><use href="#i-side5"/></svg></span>
          </div>
          <div class="measure">
            <svg viewBox="0 0 22 22"><rect x="1" y="14" width="16" height="6" fill="#fff" stroke="#444"/><circle cx="13" cy="8" r="6" fill="#fff" stroke="#444" stroke-width="1.400"/><circle cx="13" cy="8" r="2" fill="#444"/></svg>
            <svg viewBox="0 0 22 22"><path d="M2 20V13a9 9 0 0 1 18 0v7z" fill="#fff" stroke="#444" stroke-width="1.400"/><path d="M6 20v-5a5 5 0 0 1 10 0v5" fill="none" stroke="#444" stroke-width="1.400"/></svg>
            <svg viewBox="0 0 22 22"><path d="M11 1v18M2 20h18M3 5h16M5 5l-3 7h6zM17 5l-3 7h6z" fill="#fff" stroke="#333" stroke-width="1.400"/></svg>
          </div>
        </section>
      </div>
    </div>
  </main>

  <!-- element tabs -->
  <div class="tabbar">
    <div class="tabbar-search"><svg viewBox="0 0 24 24"><path d="M2 5h14l3 3v10H2z" fill="#222"/><circle cx="13" cy="12" r="6" fill="#fff" stroke="#222" stroke-width="2"/><path d="M17 16l5 5" stroke="#222" stroke-width="2.600"/></svg></div>
    <div class="tab-add">+</div>
    <div class="tabs">
      <span class="tab"><svg><use href="#i-studio"/></svg>Outter Side Plate</span>
      <span class="tab"><svg><use href="#i-studio"/></svg>Outter Side Plate Other ...</span>
      <span class="tab"><svg><use href="#i-studio"/></svg>Inner Side Plate</span>
      <span class="tab"><svg><use href="#i-studio"/></svg>Inner Side Plate Other S...</span>
      <span class="tab"><svg><use href="#i-studio"/></svg>Motor Mount</span>
      <span class="tab"><svg><use href="#i-studio"/></svg>20 Teeth Pulley For Dri...</span>
      <span class="tab active"><svg><use href="#i-tabasm"/></svg>Main Assembly</span>
      <span class="tab"><svg><use href="#i-studio"/></svg>Part Studio 3</span>
      <span class="tab"><svg><use href="#i-studio"/></svg>Part Studio 2</span>
      <span class="tab"><svg><use href="#i-studio"/></svg>Part Studio 1</span>
      <span class="tab"><svg><use href="#i-studio"/></svg>14mm Spacer</span>
      <span class="tab"><svg><use href="#i-tabasm"/></svg>Wheel Assembly</span>
    </div>
    <div class="tab-arrows">
      <svg viewBox="0 0 10 20"><path d="M8 2L2 10l6 8" fill="none" stroke="#aaa" stroke-width="1.500"/></svg>
      <svg viewBox="0 0 10 20"><path d="M2 2l6 8-6 8" fill="none" stroke="#333" stroke-width="1.500"/></svg>
    </div>
  </div>

  <!-- windows taskbar -->
  <footer class="taskbar">
    <div class="task-apps">
      <span class="app"><svg viewBox="0 0 24 24"><path d="M1 1h10.500v10.500H1zM12.500 1H23v10.500H12.500zM1 12.500h10.500V23H1zM12.500 12.500H23V23H12.500z" fill="#4cc2f1"/></svg></span>
      <span class="app"><svg viewBox="0 0 24 24"><path d="M1 3h9l2 3h11v16H1z" fill="#f5c242"/><path d="M1 3h9l2 3H1z" fill="#c8921e"/><rect x="7" y="14" width="10" height="8" rx="1" fill="#1677c9"/></svg></span>
      <span class="app"><svg viewBox="0 0 24 24"><defs><linearGradient id="msg" x1="0" y1="1" x2="1" y2="0"><stop offset="0" stop-color="#2e7bff"/><stop offset=".5" stop-color="#a33df0"/><stop offset="1" stop-color="#ff6a6a"/></linearGradient></defs><path d="M12 1C5.500 1 1 5.500 1 11.500c0 3.300 1.300 6 3.500 8V23l3.200-1.800c1.300.4 2.800.6 4.300.6 6.500 0 11-4.500 11-10.300S18.500 1 12 1z" fill="url(#msg)"/><path d="M5 14l5-6 3.500 3L19 8l-5 6-3.500-3z" fill="#fff"/></svg></span>
      <span class="app app-open"><svg viewBox="0 0 24 24"><path d="M12 1a11 11 0 0 1 9.500 5.500H12a5.500 5.500 0 0 0-5 3.200L3 3.800A11 11 0 0 1 12 1z" fill="#e0392d"/><path d="M21.500 6.500A11 11 0 0 1 12 23l4.700-8.200a5.500 5.500 0 0 0 0-8.300z" fill="#fbc02d"/><path d="M12 23A11 11 0 0 1 3 3.800l4.800 8.300a5.500 5.500 0 0 0 6 5.200z" fill="#2d9e48"/><circle cx="12" cy="12" r="4.800" fill="#3f82ec"/></svg></span>
      <span class="app"><svg viewBox="0 0 24 24"><circle cx="12" cy="12" r="11.500" fill="#5865f2"/><path d="M6 8c4-2 8-2 12 0 1.500 3 2 6 1.500 9-1.200.8-2.300 1.200-3.300 1.400l-.9-1.400c-2.200.6-4.400.6-6.600 0l-.9 1.400c-1-.2-2.100-.6-3.300-1.400C4 14 4.500 11 6 8z" fill="#fff"/><circle cx="9.500" cy="13" r="1.600" fill="#5865f2"/><circle cx="14.500" cy="13" r="1.600" fill="#5865f2"/></svg></span>
      <span class="app app-dot"><svg viewBox="0 0 24 24"><circle cx="12" cy="12" r="11.500" fill="#fff"/><path d="M10 5v5H6" stroke="#36c5f0" stroke-width="3" fill="none" stroke-linecap="round"/><path d="M14 5v5h4" stroke="#2eb67d" stroke-width="3" fill="none" stroke-linecap="round"/><path d="M6 14h5v5" stroke="#e01e5a" stroke-width="3" fill="none" stroke-linecap="round"/><path d="M18 14h-4v5" stroke="#ecb22e" stroke-width="3" fill="none" stroke-linecap="round"/></svg></span>
      <span class="app app-dot"><svg viewBox="0 0 24 24"><circle cx="12" cy="12" r="11.500" fill="#33a67c"/><circle cx="12" cy="12" r="7.500" fill="#fff"/><circle cx="12.500" cy="13" r="5" fill="#141b3c"/></svg></span>
    </div>
    <div class="tray">
      <svg class="tray-up" viewBox="0 0 12 12"><path d="M2 8l4-4 4 4" fill="none" stroke="#eee" stroke-width="1.300"/></svg>
      <span class="lang">ENG</span>
      <svg class="tray-ic" viewBox="0 0 20 20"><path d="M1 3h11v11H1zM14 1h4v7h-4M4 18h6M7 14v4" fill="none" stroke="#eee"/></svg>
      <svg class="tray-ic small" viewBox="0 0 20 20"><path d="M2 7h3l4-4v14l-4-4H2zM12 7l6 6M18 7l-6 6" fill="none" stroke="#eee"/></svg>
      <div class="clock"><span>11:57 AM</span><span>8/30/2024</span></div>
      <svg class="tray-bell" viewBox="0 0 16 22"><path d="M8 1c1 0 1.500.7 1.500 1.500C12 3.500 13 5.500 13 8c0 4 1 6 2.500 8H.5C2 14 3 12 3 8c0-2.500 1-4.500 3.500-5.500C6.500 1.700 7 1 8 1zM5.500 18h5c0 2.500-5 2.500-5 0z" fill="#8fe0ff"/></svg>
    </div>
  </footer>
</body>
</html>
```

FILE: styles.css
```css
* {
  box-sizing: border-box;
}
html, body {
  margin: 0;
  padding: 0;
  width: 1920px;
  height: 1080px;
  overflow: hidden;
  font-family: "Noto Sans", "Open Sans", sans-serif;
  background: #fff;
  color: #444;
}
.defs {
  position: absolute;
  width: 0;
  height: 0;
}

/* Browser tab strip */
.tabstrip {
  height: 42px;
  background: #2f2f2f;
  display: flex;
  align-items: flex-start;
  position: relative;
}
.tab-list {
  width: 11px;
  height: 11px;
  margin: 15px 14px 0 14px;
}
.btab {
  width: 239px;
  height: 28px;
  margin: 6px 0 0 0;
  padding: 0 17px 0 10px;
  display: flex;
  align-items: center;
  color: #e6e6e6;
}
.btab-dark {
  background: #1e1e1e;
  border-radius: 14px;
  width: 232px;
  padding: 0 12px 0 9px;
}
.fav {
  width: 15px;
  height: 18px;
  flex: none;
  margin-right: 8px;
}
.btab-dark .fav {
  width: 16px;
  height: 16px;
  margin-right: 9px;
}
.btab-title {
  flex: 1;
  overflow: hidden;
  white-space: nowrap;
  font-size: 11px;
}
.btab-x {
  font-size: 11px;
  margin-left: 6px;
  color: #ddd;
}
.btab-new {
  width: 28px;
  height: 28px;
  margin: 6px 0 0 6px;
  background: #1e1e1e;
  border-radius: 50%;
  color: #e6e6e6;
  font-size: 20px;
  line-height: 26px;
  text-align: center;
}
.win-ctrl {
  margin-left: auto;
  display: flex;
  gap: 34px;
  padding: 14px 17px 0 0;
}
.win-ctrl svg {
  width: 12px;
  height: 12px;
}

/* Browser address row */
.urlbar {
  height: 45px;
  background: #333;
  border-bottom: 1px solid #5a5a5a;
  display: flex;
  align-items: flex-start;
  padding-left: 14px;
}
.nav-ic {
  width: 16px;
  height: 16px;
  margin: 12px 20px 0 0;
}
.omnibox {
  width: 1625px;
  height: 34px;
  margin: 4px 0 0 -1px;
  background: #1b1b1b;
  border-radius: 17px;
  display: flex;
  align-items: center;
  padding: 0 15px 0 4px;
}
.site-info {
  width: 24px;
  height: 24px;
  border-radius: 50%;
  background: #3a3a3a;
  display: flex;
  align-items: center;
  justify-content: center;
  margin-right: 8px;
}
.site-info svg {
  width: 14px;
  height: 14px;
}
.url {
  flex: 1;
  font-size: 13.200px;
  color: #9a9a9a;
  white-space: nowrap;
}
.url b {
  font-weight: 400;
  color: #f0f0f0;
}
.omni-ic {
  width: 19px;
  height: 19px;
  margin-left: 13px;
}
.ext-ic {
  width: 20px;
  height: 20px;
  margin: 7px 0 0 17px;
}
.url-div {
  width: 1px;
  height: 26px;
  background: #555;
  margin: 4px 0 0 15px;
}
.ext-ic.media {
  margin-left: 17px;
}
.avatar {
  width: 20px;
  height: 20px;
  margin: 7px 0 0 16px;
  background: #3f5468;
  color: #d8e2ea;
  border-radius: 50%;
  font-size: 11px;
  line-height: 20px;
  text-align: center;
}
.ext-ic.kebab {
  width: 4px;
  margin-left: 24px;
}

/* Onshape header */
.os-top {
  height: 40px;
  background: #fafafa;
  display: flex;
  align-items: center;
  padding-left: 5px;
}
.os-logo {
  width: 20px;
  height: 24px;
}
.os-name {
  font-family: "Lato", sans-serif;
  font-weight: 300;
  font-size: 19px;
  color: #555;
  margin-left: 6px;
  width: 82px;
}
.burger {
  width: 17px;
  height: 14px;
}
.doc-title {
  font-size: 20.500px;
  font-weight: 700;
  color: #333;
  margin-left: 11px;
}
.doc-branch {
  font-size: 15px;
  color: #999;
  margin: 3px 0 0 6px;
}
.doc-link {
  width: 15px;
  height: 15px;
  margin-left: 11px;
}
.doc-folder {
  width: 18px;
  height: 16px;
  margin-left: 9px;
}
.doc-folder-name {
  font-size: 14.500px;
  color: #8a8a8a;
  margin-left: 5px;
  width: 123px;
}
.doc-cap {
  width: 18px;
  height: 18px;
}
.top-right {
  margin-left: auto;
  display: flex;
  gap: 12px;
  margin-right: 11px;
}
.top-right svg {
  width: 20px;
  height: 20px;
}
.share {
  width: 60px;
  height: 33px;
  background: #1552a8;
  color: #fff;
  border: 0;
  border-radius: 4px;
  font-family: inherit;
  font-size: 14px;
  font-weight: 600;
  padding: 0;
}
.help {
  width: 18px;
  height: 18px;
  margin-left: 10px;
  background: #666;
  color: #fff;
  border-radius: 50%;
  font-size: 14px;
  font-weight: 700;
  line-height: 18px;
  text-align: center;
}
.caret {
  width: 0;
  height: 0;
  margin-left: 6px;
  border-left: 4px solid transparent;
  border-right: 4px solid transparent;
  border-top: 5px solid #555;
}
.user-ic {
  width: 24px;
  height: 24px;
  margin-left: 13px;
}
.user-name {
  font-size: 13.500px;
  color: #555;
  margin-left: 5px;
}
.os-top .caret:last-child {
  margin-right: 6px;
  margin-left: 7px;
}

/* Workspace */
.workspace {
  height: 875px;
  display: flex;
}
.rail {
  width: 40px;
  background: #fafafa;
  display: flex;
  flex-direction: column;
  align-items: center;
  flex: none;
}
.rail-tab {
  width: 40px;
  height: 36px;
  margin-bottom: -7px;
  background: #fafafa;
  display: flex;
  justify-content: center;
  align-items: center;
}
.rail-tab svg {
  width: 23px;
  height: 23px;
}
.rail-ic {
  width: 21px;
  height: 21px;
  margin-top: 14px;
}
.rail-sep {
  width: 40px;
  height: 1px;
  background: #ccc;
  margin: 7px 0 -7px;
}
.main-col {
  flex: 1;
  display: flex;
  flex-direction: column;
  min-width: 0;
}
.toolbar {
  height: 36px;
  display: flex;
  align-items: center;
  background: #fff;
  flex: none;
}
.tb {
  width: 34px;
  height: 36px;
  display: flex;
  align-items: center;
  justify-content: center;
  flex: none;
}
.tb svg {
  width: 23px;
  height: 23px;
}
.tb-sep {
  width: 2px;
  height: 30px;
  margin: 0 1px;
  background: #ddd;
  flex: none;
}
.tb-insert {
  width: 79px;
  padding-left: 8px;
  display: flex;
  align-items: center;
  font-size: 13.200px;
  color: #444;
  flex: none;
}
.tb-insert svg {
  width: 21px;
  height: 21px;
  margin-right: 3px;
}
.tool-search {
  margin-left: 11px;
  width: 160px;
  height: 32px;
  background: #eee;
  border-radius: 3px;
  display: flex;
  align-items: center;
  padding-left: 10px;
  font-size: 13.500px;
  color: #444;
  white-space: nowrap;
}
kbd {
  font-family: inherit;
  font-size: 10.500px;
  height: 19px;
  line-height: 17px;
  padding: 0 3px;
  background: #f6f6f6;
  border: 1px solid #bbb;
  border-bottom: 2px solid #aaa;
  border-radius: 2px;
  color: #444;
}
.tool-search kbd:first-of-type {
  margin-left: 3px;
}
.tool-search kbd:last-of-type {
  padding: 0 5px;
}
.work-row {
  flex: 1;
  display: flex;
  min-height: 0;
}

/* Instances panel */
.panel {
  width: 206px;
  flex: none;
  background: #fff;
  border-top: 1px solid #ccc;
  border-left: 1px solid #ccc;
  border-right: 1px solid #ccc;
  display: flex;
  flex-direction: column;
}
.filter-row {
  height: 39px;
  display: flex;
  align-items: center;
  padding: 6px 0 0 10px;
}
.funnel {
  width: 16px;
  height: 16px;
}
.filter-box {
  width: 122px;
  height: 30px;
  margin-left: 12px;
  border: 1px solid #bbb;
  border-radius: 3px;
  padding-left: 6px;
  font-size: 12.500px;
  line-height: 27px;
  font-style: italic;
  color: #777;
}
.list-ic {
  width: 15px;
  height: 15px;
  margin-left: 14px;
}
.inst-row {
  height: 27px;
  display: flex;
  align-items: center;
  padding-left: 3px;
  font-size: 12.500px;
  font-weight: 500;
  color: #333;
}
.folder-plus {
  width: 19px;
  height: 15px;
  margin-left: 88px;
}
.tree-wrap {
  flex: 1;
  display: flex;
  min-height: 0;
  overflow: hidden;
  margin-top: 1px;
}
.tree {
  list-style: none;
  margin: 0;
  padding: 3px 0 0 0;
  width: 183px;
  overflow: hidden;
  flex: none;
}
.row {
  height: 26px;
  display: flex;
  align-items: center;
  padding-left: 24px;
  position: relative;
  font-size: 12.600px;
  color: #555;
  white-space: nowrap;
}
.row.off {
  color: #aaa;
}
.row.off .ic {
  opacity: .45;
}
.chev {
  position: absolute;
  left: 5px;
  top: 7px;
  width: 8px;
  height: 12px;
}
.ic {
  width: 18px;
  height: 18px;
  flex: none;
  margin-right: 3px;
}
.name {
  width: 52px;
  overflow: hidden;
  flex: none;
}
.name.short {
  width: 29px;
}
.name.mid {
  width: 68px;
}
.name.wide {
  width: auto;
}
.triad {
  width: 16px;
  height: 16px;
  margin-right: 7px;
  flex: none;
}
.dots {
  width: 10px;
  height: 18px;
  flex: none;
}
.back-arrow {
  width: 10px;
  height: 10px;
  margin-top: -4px;
}
.blue-dot {
  width: 8px;
  height: 8px;
  background: #6b9ed6;
  border-radius: 50%;
  margin: -4px 0 0 1px;
}
.scroll {
  width: 17px;
  background: #f1f1f1;
  display: flex;
  flex-direction: column;
  align-items: center;
  position: relative;
}
.sc-up {
  margin-top: 5px;
  border-left: 4px solid transparent;
  border-right: 4px solid transparent;
  border-bottom: 5px solid #555;
}
.sc-thumb {
  width: 13px;
  height: 180px;
  background: #c0c0c0;
  margin: 206px 2px 0 0;
}
.sc-down {
  margin-top: auto;
  margin-bottom: 6px;
  border-left: 4px solid transparent;
  border-right: 4px solid transparent;
  border-top: 5px solid #555;
}

/* Graphics area */
.viewport {
  flex: 1;
  position: relative;
  background: #fff;
  overflow: hidden;
}
.cad {
  display: block;
  width: 100%;
  height: 100%;
}
.ax-z, .ax-y, .ax-r {
  font-family: "Noto Sans", sans-serif;
  text-anchor: middle;
}
.ax-z {
  font-size: 13px;
  fill: #2a2ad0;
}
.ax-y {
  font-size: 13px;
  fill: #1f8a1f;
}
.ax-r {
  font-size: 12px;
  fill: #333;
}
.float-list {
  position: absolute;
  left: -1px;
  top: 394px;
  width: 32px;
  height: 33px;
  background: #fff;
  display: flex;
  align-items: center;
  justify-content: center;
}
.float-list svg {
  width: 18px;
  height: 18px;
}
.view-btn {
  position: absolute;
  left: 1615px;
  top: 142px;
  width: 44px;
  height: 27px;
  background: rgba(255,255,255,.3);
  border-radius: 3px;
  display: flex;
  align-items: center;
  padding-left: 5px;
}
.view-btn svg {
  width: 19px;
  height: 19px;
}
.view-caret {
  margin-left: 7px;
  border-left: 4px solid transparent;
  border-right: 4px solid transparent;
  border-top: 4px solid #444;
}
.side-btns {
  position: absolute;
  right: 0;
  top: 329px;
  width: 32px;
  display: flex;
  flex-direction: column;
  background: #fff;
}
.side-btns span {
  height: 33px;
  display: flex;
  align-items: center;
  justify-content: center;
  border-bottom: 1px solid #bbb;
}
.side-btns span:last-child {
  border-bottom: 0;
}
.side-btns svg {
  width: 22px;
  height: 22px;
}
.measure {
  position: absolute;
  right: 11px;
  bottom: 5px;
  display: flex;
  gap: 17px;
}
.measure svg {
  width: 18px;
  height: 18px;
}

/* Element tabs */
.tabbar {
  height: 30px;
  display: flex;
  background: #d8d8d8;
}
.tabbar-search {
  width: 40px;
  height: 30px;
  background: #fafafa;
  display: flex;
  align-items: center;
  justify-content: center;
  flex: none;
}
.tabbar-search svg {
  width: 20px;
  height: 20px;
}
.tab-add {
  width: 40px;
  height: 30px;
  padding-right: 3px;
  flex: none;
  color: #555;
  font-size: 26px;
  line-height: 28px;
  text-align: center;
}
.tabs {
  flex: 1;
  display: flex;
  gap: 2px;
  overflow: hidden;
  min-width: 0;
}
.tab {
  height: 27px;
  background: #e8e8e8;
  border-radius: 0 0 5px 5px;
  display: flex;
  align-items: center;
  padding: 0 11px 0 11px;
  font-size: 13.100px;
  color: #666;
  white-space: nowrap;
  flex: none;
}
.tab svg {
  width: 20px;
  height: 20px;
  margin-right: 1px;
  flex: none;
}
.tab.active {
  background: #fff;
  color: #444;
  height: 28px;
  padding: 0 14px 0 13px;
  border-bottom: 2px solid #1552a8;
  border-radius: 0;
}
.tab.active svg {
  margin-right: 4px;
}
.tab-arrows {
  width: 47px;
  flex: none;
  display: flex;
  align-items: center;
  justify-content: space-between;
  padding: 0 7px;
  background: #dcdcdc;
  box-shadow: -8px 0 8px -2px #dcdcdc;
}
.tab-arrows svg {
  width: 10px;
  height: 20px;
}

/* Windows taskbar */
.taskbar {
  height: 48px;
  background: #1c1c1c;
  display: flex;
  align-items: center;
  justify-content: space-between;
}
.task-apps {
  display: flex;
  padding-left: 11px;
}
.app {
  width: 44px;
  height: 40px;
  display: flex;
  align-items: center;
  justify-content: center;
  position: relative;
}
.app svg {
  width: 24px;
  height: 24px;
}
.app-open {
  background: #2a2a2a;
  border-radius: 4px;
}
.app-open::after {
  content: "";
  position: absolute;
  left: 14px;
  bottom: 1px;
  width: 16px;
  height: 3px;
  background: #4cc2f1;
  border-radius: 2px;
}
.app-dot::after {
  content: "";
  position: absolute;
  left: 20px;
  bottom: 2px;
  width: 5px;
  height: 5px;
  background: #8a8a8a;
  border-radius: 50%;
}
.tray {
  display: flex;
  align-items: center;
  color: #eee;
  font-size: 11.500px;
}
.tray-up {
  width: 12px;
  height: 12px;
}
.lang {
  margin-left: 21px;
}
.tray-ic {
  width: 20px;
  height: 20px;
  margin-left: 16px;
}
.tray-ic.small {
  width: 16px;
  height: 16px;
  margin-left: 5px;
}
.clock {
  display: flex;
  flex-direction: column;
  align-items: flex-end;
  margin-left: 17px;
  line-height: 16px;
}
.tray-bell {
  width: 15px;
  height: 20px;
  margin: 0 21px 0 8px;
}
```
